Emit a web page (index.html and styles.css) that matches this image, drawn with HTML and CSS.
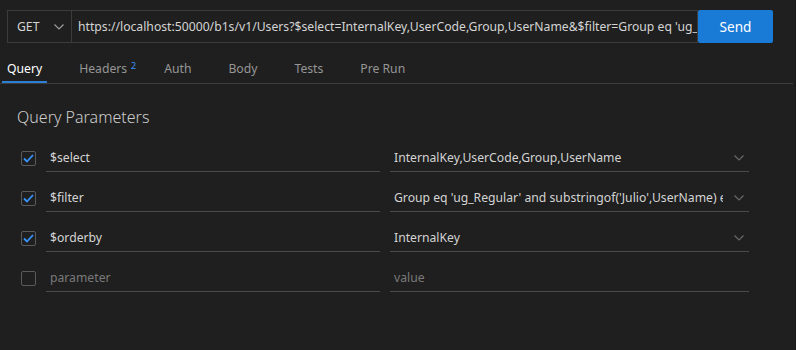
FILE: index.html
```html
<html>
    <head>
        <title>Query</title>
        <link rel="stylesheet" href="styles.css">
    </head>
    <body>
        <div class="request-bar">
            <div class="method">
                <span>GET</span>
                <svg class="chevron" width="10" height="6" viewBox="0 0 10 6"><path d="M0.5 0.5 L5 5 L9.5 0.5" fill="none" stroke="#a0a0a0" stroke-width="1.1"/></svg>
            </div>
            <div class="url">https://localhost:50000/b1s/v1/Users?$select=InternalKey,UserCode,Group,UserName&amp;$filter=Group eq 'ug_Regular' and substringof('Julio',UserName)</div>
            <button class="send">Send</button>
        </div>

        <div class="tabs">
            <div class="tab active">Query</div>
            <div class="tab">Headers<sup>2</sup></div>
            <div class="tab">Auth</div>
            <div class="tab">Body</div>
            <div class="tab">Tests</div>
            <div class="tab">Pre Run</div>
        </div>

        <div class="params">
            <h2>Query Parameters</h2>

            <div class="row">
                <div class="check on"><svg width="13" height="13" viewBox="0 0 13 13"><path d="M2 6.5 L5 9.5 L11 3" fill="none" stroke="#3794ff" stroke-width="1.8"/></svg></div>
                <div class="field key">$select</div>
                <div class="field value"><span class="clip">InternalKey,UserCode,Group,UserName</span><svg class="chevron" width="10" height="6" viewBox="0 0 10 6"><path d="M0.5 0.5 L5 5 L9.5 0.5" fill="none" stroke="#6a6a6a" stroke-width="1.1"/></svg></div>
            </div>
            <div class="row">
                <div class="check on"><svg width="13" height="13" viewBox="0 0 13 13"><path d="M2 6.5 L5 9.5 L11 3" fill="none" stroke="#3794ff" stroke-width="1.8"/></svg></div>
                <div class="field key">$filter</div>
                <div class="field value"><span class="clip">Group eq 'ug_Regular' and substringof('Julio',UserName) eq true</span><svg class="chevron" width="10" height="6" viewBox="0 0 10 6"><path d="M0.5 0.5 L5 5 L9.5 0.5" fill="none" stroke="#6a6a6a" stroke-width="1.1"/></svg></div>
            </div>
            <div class="row">
                <div class="check on"><svg width="13" height="13" viewBox="0 0 13 13"><path d="M2 6.5 L5 9.5 L11 3" fill="none" stroke="#3794ff" stroke-width="1.8"/></svg></div>
                <div class="field key">$orderby</div>
                <div class="field value"><span class="clip">InternalKey</span><svg class="chevron" width="10" height="6" viewBox="0 0 10 6"><path d="M0.5 0.5 L5 5 L9.5 0.5" fill="none" stroke="#6a6a6a" stroke-width="1.1"/></svg></div>
            </div>
            <div class="row">
                <div class="check"></div>
                <div class="field key empty">parameter</div>
                <div class="field value empty">value</div>
            </div>
        </div>
    </body>
</html>
```

FILE: styles.css
```css
*{
    margin: 0;
    padding: 0;
    box-sizing: border-box;
}
body{
    background: #1f1f1f;
    color: #cccccc;
    font-family: "Noto Sans", "Open Sans", sans-serif;
    font-size: 12.2px;
    width: 796px;
    height: 350px;
    overflow: hidden;
    border-right: 1px solid #181818;
}

.request-bar{
    display: flex;
    height: 33px;
    margin: 10px 22px 0 7px;
}
.method{
    width: 65px;
    display: flex;
    align-items: center;
    justify-content: space-between;
    padding: 0 7px 0 9px;
    border: 1px solid #3c3c3c;
    color: #d4d4d4;
}
.url{
    flex: 1;
    display: flex;
    align-items: center;
    padding-left: 6px;
    border: 1px solid #3c3c3c;
    border-left: none;
    white-space: nowrap;
    overflow: hidden;
    color: #d4d4d4;
}
.send{
    width: 75px;
    border: none;
    border-radius: 2px;
    background: #1a7bd6;
    color: #ffffff;
    font-family: inherit;
    font-size: 13.6px;
}

.tabs{
    display: flex;
    gap: 27px;
    height: 41px;
    margin-right: 2px;
    padding-left: 2px;
    border-bottom: 1px solid #3c3c3c;
    align-items: flex-end;
}
.tab{
    position: relative;
    line-height: 18px;
    padding: 0 5px 3px 5px;
    color: #969696;
    border-bottom: 2px solid transparent;
}
.tab.active{
    color: #ffffff;
    border-bottom-color: #2b7fd4;
}
.tab sup{
    position: absolute;
    top: -3px;
    right: -4px;
    color: #3794ff;
    font-size: 9px;
}

.params{
    padding: 22px 0 0 17px;
}
.params h2{
    font-size: 16px;
    font-weight: 300;
    line-height: 22px;
    padding-bottom: 4px;
    color: #cccccc;
}
.row{
    display: flex;
    align-items: center;
    height: 28px;
    margin-top: 12px;
}
.check{
    width: 15px;
    height: 15px;
    margin: 0 10px 0 4px;
    border: 1px solid #5a5a5a;
    border-radius: 2px;
    display: flex;
    align-items: center;
    justify-content: center;
}
.field{
    height: 28px;
    display: flex;
    align-items: center;
    border-bottom: 1px solid #4a4a4a;
    padding: 0 4px;
    white-space: nowrap;
    overflow: hidden;
}
.key{
    width: 334px;
    color: #d4d4d4;
}
.value{
    width: 359px;
    margin-left: 10px;
    justify-content: space-between;
    color: #d4d4d4;
}
.value .clip{
    overflow: hidden;
    width: 329px;
}
.value .chevron{
    margin-right: 1px;
    flex-shrink: 0;
}
.empty{
    color: #7a7a7a;
}
```
